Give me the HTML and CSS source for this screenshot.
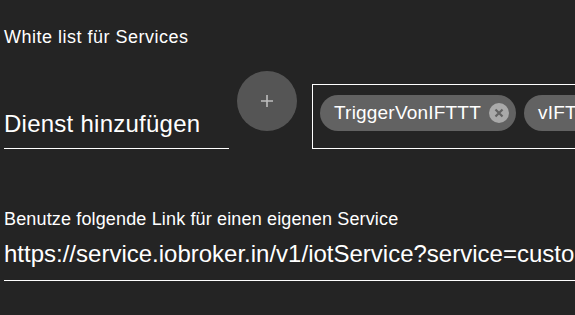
FILE: index.html
```html
<!DOCTYPE html>
<html>
<head>
<meta charset="utf-8">
<link rel="stylesheet" href="styles.css">
</head>
<body>
<div class="page">
  <div class="section-label">White list für Services</div>
  <div class="add-row">
    <div class="text-field">
      <div class="field-input">Dienst hinzufügen</div>
    </div>
    <button class="fab" aria-label="add">
      <svg width="14" height="14" viewBox="0 0 14 14"><path d="M7 1v12M1 7h12" stroke="#bdbdbd" stroke-width="1.6"/></svg>
    </button>
    <div class="chip-box">
      <div class="chip">
        <span class="chip-label">TriggerVonIFTTT</span>
        <svg class="chip-del" width="20" height="20" viewBox="0 0 20 20"><circle cx="10" cy="10" r="10" fill="#a9a9a9"/><path d="M6.5 6.5l7 7M13.5 6.5l-7 7" stroke="#626262" stroke-width="2.2"/></svg>
      </div>
      <div class="chip">
        <span class="chip-label">vIFTTT</span>
        <svg class="chip-del" width="20" height="20" viewBox="0 0 20 20"><circle cx="10" cy="10" r="10" fill="#a9a9a9"/><path d="M6.5 6.5l7 7M13.5 6.5l-7 7" stroke="#626262" stroke-width="2.2"/></svg>
      </div>
    </div>
  </div>
  <div class="link-label">Benutze folgende Link für einen eigenen Service</div>
  <div class="link-field">https://service.iobroker.in/v1/iotService?service=custom_&lt;SERVICE_NAME&gt;&amp;key=</div>
</div>
</body>
</html>
```
FILE: styles.css
```css
html, body {
  margin: 0;
  padding: 0;
  background: #242424;
  overflow: hidden;
}
body {
  width: 575px;
  height: 315px;
  font-family: "Liberation Sans", Arial, sans-serif;
  color: #fff;
}
.page {
  padding: 27px 0 0 4px;
  overflow: hidden;
  height: 288px;
}
.section-label {
  font-size: 18px;
  line-height: 20px;
  letter-spacing: 0.5px;
}
.add-row {
  display: flex;
  align-items: flex-start;
  width: 800px;
}
.text-field {
  width: 225px;
  height: 102px;
  display: flex;
  flex-direction: column;
  justify-content: flex-end;
  flex: none;
}
.field-input {
  font-size: 24px;
  line-height: 28px;
  letter-spacing: 0.25px;
  padding: 0 0 10px 0;
  border-bottom: 1px solid #fff;
}
.fab {
  width: 60px;
  height: 60px;
  border-radius: 50%;
  border: none;
  background: #555;
  margin: 24px 0 0 8px;
  padding: 0;
  display: flex;
  align-items: center;
  justify-content: center;
  flex: none;
}
.chip-box {
  box-sizing: border-box;
  margin: 37px 0 0 15px;
  height: 65px;
  border: 1px solid #fff;
  display: flex;
  align-items: flex-start;
  gap: 8px;
  padding: 10px 7px 0;
  flex: none;
  width: 400px;
}
.chip {
  height: 36px;
  border-radius: 18px;
  background: #626262;
  display: flex;
  align-items: center;
  padding: 0 7px 0 14px;
  gap: 8px;
  flex: none;
}
.chip-label {
  font-size: 19px;
  letter-spacing: 0.2px;
}
.chip-del {
  display: block;
}
.link-label {
  margin-top: 60px;
  font-size: 18px;
  line-height: 20px;
  letter-spacing: 0.15px;
}
.link-field {
  font-size: 24px;
  line-height: 28px;
  margin-top: 11px;
  padding-bottom: 12px;
  border-bottom: 1px solid #fff;
  white-space: nowrap;
  overflow: hidden;
  width: 700px;
}
```
